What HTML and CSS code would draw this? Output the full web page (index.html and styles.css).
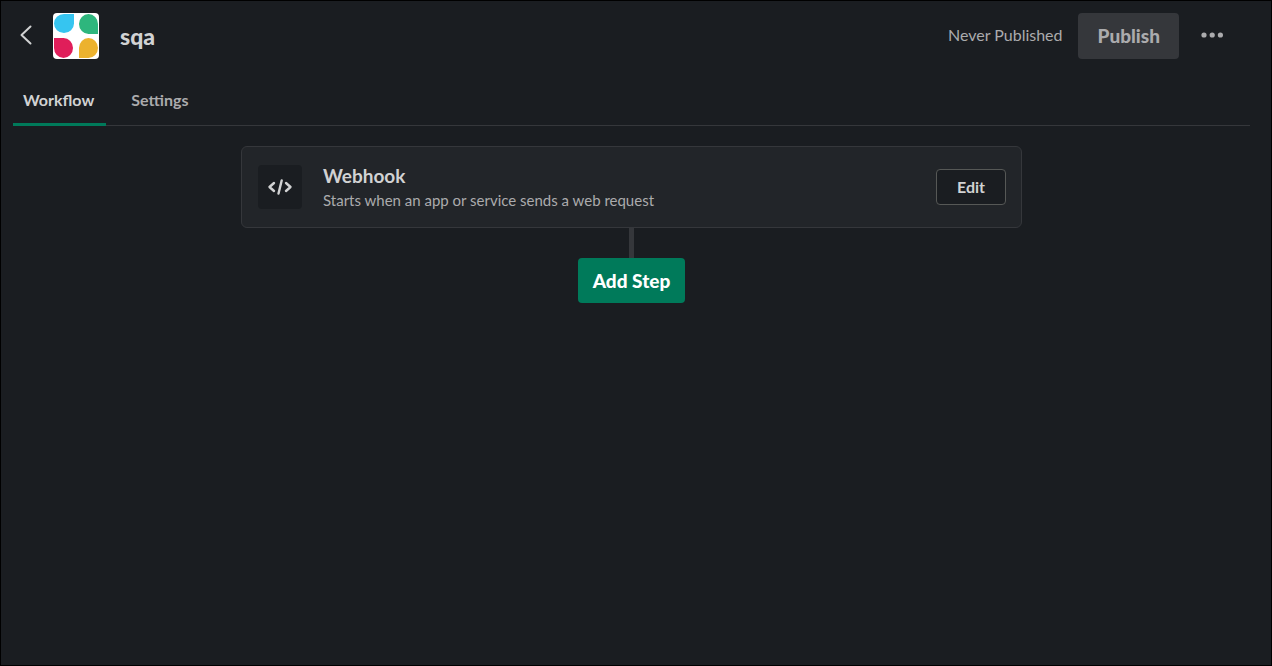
FILE: index.html
```html
<!DOCTYPE html>
<html lang="en">
<head>
<meta charset="utf-8">
<title>sqa – Workflow Builder</title>
<link rel="stylesheet" href="styles.css">
</head>
<body>
<div class="app">
  <header class="header">
    <button class="icon-button back" type="button" aria-label="Back">
      <svg width="12" height="20" viewBox="0 0 12 20" fill="none" stroke="currentColor" stroke-width="2" stroke-linecap="round" stroke-linejoin="round"><path d="M10.500 1.500 1.500 10l9 8.500"/></svg>
    </button>
    <svg class="logo" viewBox="0 0 46 46" aria-hidden="true">
      <rect width="46" height="46" fill="#fff"/>
      <path fill="#36c5f0" d="M21 1v9.500a10 9.500 0 1 1-10-9.500z"/>
      <path fill="#2eb67d" d="M45 21V11a9.500 10 0 1 0-9.500 10z"/>
      <path fill="#e01e5a" d="M1 25h9.500a9.500 10 0 1 1-9.500 10z"/>
      <path fill="#ecb22e" d="M26 45V35a9.500 10 0 1 1 9.500 10z"/>
    </svg>
    <h1 class="title">sqa</h1>
    <span class="status">Never Published</span>
    <button class="button publish" type="button" disabled>Publish</button>
    <button class="icon-button more" type="button" aria-label="More actions">
      <svg width="24" height="6" viewBox="0 0 24 6" fill="currentColor"><circle cx="4" cy="3" r="2.600"/><circle cx="12.200" cy="3" r="2.600"/><circle cx="20.400" cy="3" r="2.600"/></svg>
    </button>
  </header>
  <nav class="tabs">
    <a class="tab tab-active" href="#workflow" aria-current="page">Workflow</a>
    <a class="tab" href="#settings">Settings</a>
  </nav>
  <main class="flow">
    <section class="card">
      <span class="card-icon">
        <svg width="26" height="18" viewBox="0 0 26 18" fill="none" stroke="currentColor" stroke-width="2.400" stroke-linecap="round" stroke-linejoin="round"><path d="M7 5 2.500 9 7 13M19 5l4.500 4-4.500 4M14.700 2.500l-3.200 13"/></svg>
      </span>
      <div class="card-text">
        <h2 class="card-title">Webhook</h2>
        <p class="card-description">Starts when an app or service sends a web request</p>
      </div>
      <button class="button edit" type="button">Edit</button>
    </section>
    <div class="connector"></div>
    <button class="button add-step" type="button">Add Step</button>
  </main>
</div>
</body>
</html>
```
FILE: styles.css
```css
* {
  box-sizing: border-box;
}

body {
  margin: 0;
  background: #1a1d21;
  color: #d1d2d3;
  font-family: Lato, "Liberation Sans", sans-serif;
  font-size: 16px;
}

.app {
  min-height: 100vh;
  padding: 12px 21px 12px 12px;
  border: 1px solid #000;
}

.header {
  display: flex;
  align-items: center;
}

.button {
  border: 0;
  border-radius: 4px;
  font: inherit;
  cursor: pointer;
}

.icon-button {
  display: flex;
  padding: 0;
  border: 0;
  background: none;
  color: inherit;
  cursor: pointer;
}

.back {
  padding: 0 21px 2px 7px;
}

.logo {
  width: 46px;
  height: 46px;
  border-radius: 4px;
}

.title {
  flex: 1;
  margin: 0 0 0 21px;
  font-size: 23px;
  line-height: 30px;
  font-weight: 900;
}

.status {
  margin-right: 15px;
  padding-bottom: 2px;
  color: #ababad;
  line-height: 20px;
}

.publish {
  height: 46px;
  padding: 0 19px 2px 20px;
  background: #35373b;
  color: #ababad;
  font-size: 19px;
  font-weight: 900;
}

.more {
  padding: 0 26px 2px 21px;
  color: #ababad;
}

.tabs {
  display: flex;
  gap: 15px;
  margin-top: 17px;
  box-shadow: inset 0 -1px #35373b;
}

.tab {
  padding: 12px 12px 11px 10px;
  border-bottom: 3px solid transparent;
  color: #ababad;
  font-weight: 700;
  line-height: 24px;
  text-decoration: none;
}

.tab-active {
  border-color: #007a5a;
  color: #d1d2d3;
}

.flow {
  display: flex;
  flex-direction: column;
  align-items: center;
  padding-top: 20px;
}

.card {
  display: flex;
  align-items: center;
  width: 100%;
  max-width: 781px;
  min-height: 82px;
  padding: 15px 15px 15px 16px;
  border: 1px solid #35373b;
  border-radius: 6px;
  background: #222529;
}

.card-icon {
  display: grid;
  place-items: center;
  width: 44px;
  height: 44px;
  border-radius: 4px;
  background: #1a1d21;
}

.card-text {
  flex: 1;
  margin-left: 21px;
}

.card-title {
  margin: 0;
  font-size: 19px;
  font-weight: 700;
  line-height: 26px;
}

.card-description {
  margin: 0;
  color: #ababad;
  font-size: 15px;
  line-height: 23px;
}

.edit {
  height: 36px;
  padding: 0 20px 2px;
  border: 1px solid #565856;
  background: #1a1d21;
  color: #d1d2d3;
  font-weight: 700;
}

.connector {
  width: 5px;
  height: 30px;
  background: #35373b;
}

.add-step {
  height: 45px;
  padding: 0 15px;
  background: #007a5a;
  color: #fff;
  font-size: 19px;
  font-weight: 900;
}
```
